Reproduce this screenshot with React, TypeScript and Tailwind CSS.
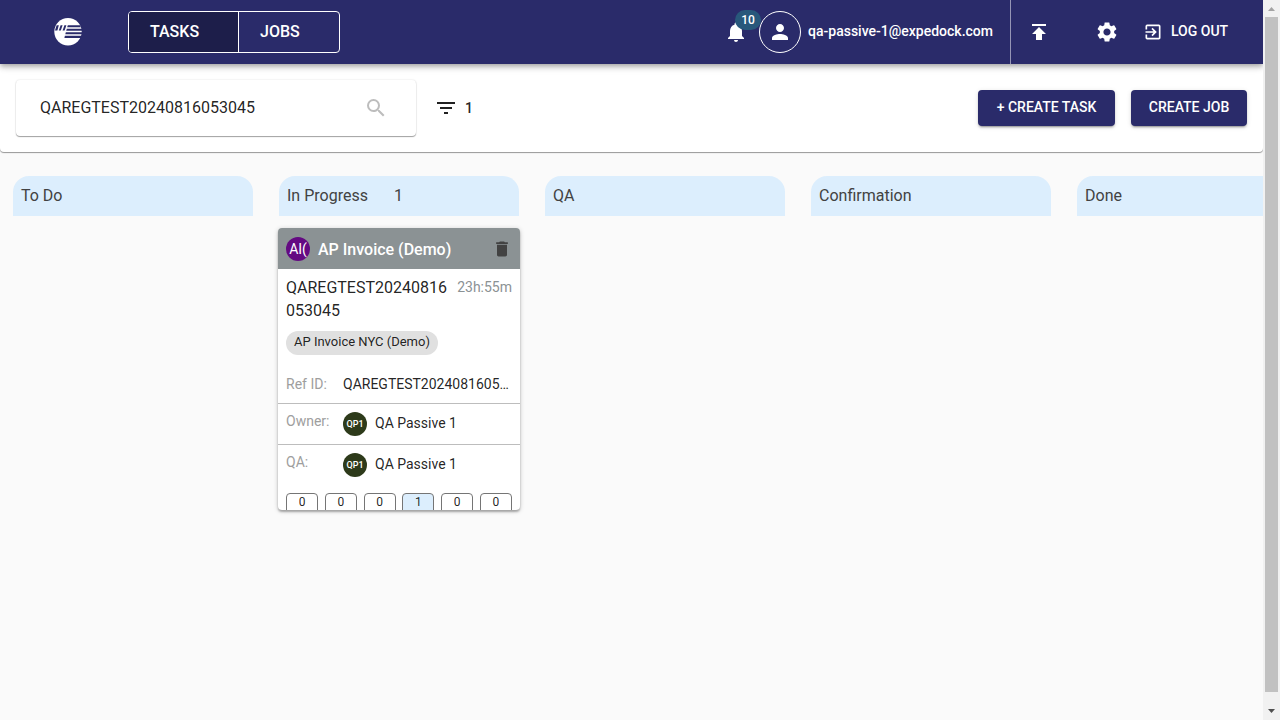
import {
  MdDelete,
  MdExitToApp,
  MdFilterList,
  MdNotifications,
  MdPerson,
  MdPublish,
  MdSearch,
  MdSettings,
} from 'react-icons/md';

type Column = { title: string; count?: number };

const columns: Column[] = [
  { title: 'To Do' },
  { title: 'In Progress', count: 1 },
  { title: 'QA' },
  { title: 'Confirmation' },
  { title: 'Done' },
];

const stageCounts = [0, 0, 0, 1, 0, 0];

function Logo() {
  return (
    <svg viewBox="0 0 28 28" className="size-7" aria-hidden="true">
      <circle cx="14" cy="13.7" r="13.7" fill="#fff" />
      <g fill="#2a2b6a">
        <path d="M2.600 7.200h2.200L3.400 12.600H1z" />
        <path d="M6.600 7.200h2L6.800 12.600H4.800z" />
        <path d="M10.400 7.200h2L10.600 12.600H8.600z" />
        <path d="M13.800 7.200H26.200l.6 2H13.200z" />
        <path d="M12.800 10.700H28v2.100H12.200z" />
        <path d="M11.800 14.200H28v2.100H11.300z" />
        <path d="M10.900 17.800H28l-.8 2.100H10.400z" />
      </g>
    </svg>
  );
}

function Header() {
  return (
    <header className="relative z-10 flex h-16 items-center bg-[#2a2b6a] text-white shadow-[0_2px_4px_-1px_rgba(0,0,0,0.2),0_4px_5px_rgba(0,0,0,0.14),0_1px_10px_rgba(0,0,0,0.12)]">
      <a href="#home" aria-label="Home" className="ml-[54px]">
        <Logo />
      </a>
      <nav className="ml-[46px] flex h-[42px] overflow-hidden rounded border border-white text-base font-medium">
        <button className="w-[110px] border-r border-white bg-[#1d1e4a] pl-[21px] text-left">TASKS</button>
        <button className="w-[100px] pl-[21px] text-left">JOBS</button>
      </nav>
      <div className="ml-auto flex h-full items-center">
        <button aria-label="Notifications" className="relative mr-[11px] flex">
          <MdNotifications className="size-6" />
          <span className="absolute -top-2.5 left-[11px] flex h-5 w-[26px] items-center justify-center rounded-full bg-[#28587b] text-xs font-medium">
            10
          </span>
        </button>
        <span className="flex size-[42px] items-center justify-center rounded-full border border-white">
          <MdPerson className="size-6" />
        </span>
        <span className="ml-[7px] pb-0.5 text-sm font-medium">qa-passive-1@expedock.com</span>
        <span className="ml-[17px] h-full w-px bg-white/50" />
        <button aria-label="Upload" className="ml-4">
          <MdPublish className="size-6" />
        </button>
        <button aria-label="Settings" className="ml-11">
          <MdSettings className="size-6" />
        </button>
        <button className="mr-8 ml-6 flex w-[88px] items-center gap-2 text-sm font-medium">
          <MdExitToApp className="size-5" />
          <span className="pb-0.5">LOG OUT</span>
        </button>
      </div>
    </header>
  );
}

function Toolbar() {
  const action =
    'h-9 rounded bg-[#2a2b6a] pb-0.5 text-sm font-medium text-white shadow-[0_3px_1px_-2px_rgba(0,0,0,0.2),0_2px_2px_rgba(0,0,0,0.14),0_1px_5px_rgba(0,0,0,0.12)]';
  return (
    <section className="flex h-[88px] items-center rounded-b bg-white px-4 shadow-[0_1px_1px_rgba(0,0,0,0.4)]">
      <div className="flex h-14 w-[400px] items-center rounded pr-7 pl-6 shadow-[0_1px_1px_rgba(0,0,0,0.35),0_0_2px_rgba(0,0,0,0.14)]">
        <input
          aria-label="Search tasks"
          defaultValue="QAREGTEST20240816053045"
          className="min-w-0 flex-1 bg-transparent text-base text-black/87 outline-none"
        />
        <button aria-label="Search" className="text-[#bdbdbd]">
          <MdSearch className="size-6" />
        </button>
      </div>
      <button aria-label="Filters, 1 active" className="ml-[18px] flex items-center gap-[7px] text-sm font-medium text-black/87">
        <MdFilterList className="size-6" />1
      </button>
      <div className="ml-auto flex gap-4">
        <button className={`${action} w-[137px]`}>+ CREATE TASK</button>
        <button className={`${action} w-[116px]`}>CREATE JOB</button>
      </div>
    </section>
  );
}

function PersonRow({ label }: { label: string }) {
  return (
    <div className="flex px-2 pb-2">
      <dt className="w-[57px] pt-[7px] text-sm text-[#9e9e9e]">{label}</dt>
      <dd className="flex items-center gap-2 pt-2 text-sm">
        <span className="flex size-6 items-center justify-center rounded-full bg-[#2d3a1a] text-[9px] font-medium text-white">
          QP1
        </span>
        <span className="pb-0.5">QA Passive 1</span>
      </dd>
    </div>
  );
}

function TaskCard() {
  return (
    <article className="mt-3 -ml-px h-[282px] w-[242px] overflow-hidden rounded bg-white text-black/87 shadow-[0_2px_2px_rgba(0,0,0,0.25),0_1px_5px_rgba(0,0,0,0.2)]">
      <div className="flex h-[41px] items-center bg-[#8b9294] px-2 text-white">
        <span className="flex size-6 items-center justify-center overflow-hidden rounded-full bg-[#640a82] text-sm">
          AI(
        </span>
        <h3 className="ml-2 flex-1 pt-0.5 text-base font-medium">AP Invoice (Demo)</h3>
        <button aria-label="Delete task" className="text-[#424242]">
          <MdDelete className="size-5" />
        </button>
      </div>
      <div className="flex justify-between px-2 pt-[7px]">
        <p className="w-[165px] text-base leading-[23px] break-all">QAREGTEST20240816053045</p>
        <span className="text-sm leading-[23px] text-[#8b9294]">23h:55m</span>
      </div>
      <div className="flex px-2 pt-[9px]">
        <span className="flex h-6 items-center rounded-full bg-[#e0e0e0] px-2 pb-0.5 text-[13px]">
          AP Invoice NYC (Demo)
        </span>
      </div>
      <dl className="divide-y divide-[#bdbdbd]">
        <div className="flex h-[49px] px-2 pt-[19px] text-sm">
          <dt className="w-[57px] shrink-0 text-[#9e9e9e]">Ref ID:</dt>
          <dd className="truncate">QAREGTEST20240816053045</dd>
        </div>
        <PersonRow label="Owner:" />
        <PersonRow label="QA:" />
      </dl>
      <ul className="mt-2 flex justify-between px-2 text-xs">
        {stageCounts.map((n, i) => (
          <li
            key={i}
            className={`flex h-6 w-8 justify-center rounded border border-[#757575] ${n > 0 ? 'bg-[#dceefd]' : 'bg-white'}`}
          >
            {n}
          </li>
        ))}
      </ul>
    </article>
  );
}

function Board() {
  return (
    <main className="flex gap-[26px] overflow-hidden pt-6 pb-6 pl-[13px]">
      {columns.map((column) => (
        <section key={column.title} className="w-60 shrink-0">
          <h2 className="flex h-10 items-center gap-[26px] rounded-t-2xl bg-[#dceefd] px-2 text-base text-[#424242]">
            {column.title}
            {column.count !== undefined && <span>{column.count}</span>}
          </h2>
          {column.count !== undefined && <TaskCard />}
        </section>
      ))}
    </main>
  );
}

function ScrollTrack() {
  return (
    <div aria-hidden="true" className="flex w-[17px] shrink-0 flex-col items-center bg-[#f1f1f1]">
      <svg viewBox="0 0 17 17" className="h-[17px] w-[17px]">
        <path d="M5 11h7L8.500 7z" fill="#a3a3a3" />
      </svg>
      <div className="w-[13px] flex-1 bg-[#c1c1c1]" />
      <svg viewBox="0 0 17 17" className="mt-[11px] h-[17px] w-[17px]">
        <path d="M5 6h7L8.500 10z" fill="#505050" />
      </svg>
    </div>
  );
}

export default function App() {
  return (
    <div className="flex h-screen bg-[#fafafa] font-[Roboto,sans-serif]">
      <div className="min-w-0 flex-1 overflow-hidden">
        <Header />
        <Toolbar />
        <Board />
      </div>
      <ScrollTrack />
    </div>
  );
}
